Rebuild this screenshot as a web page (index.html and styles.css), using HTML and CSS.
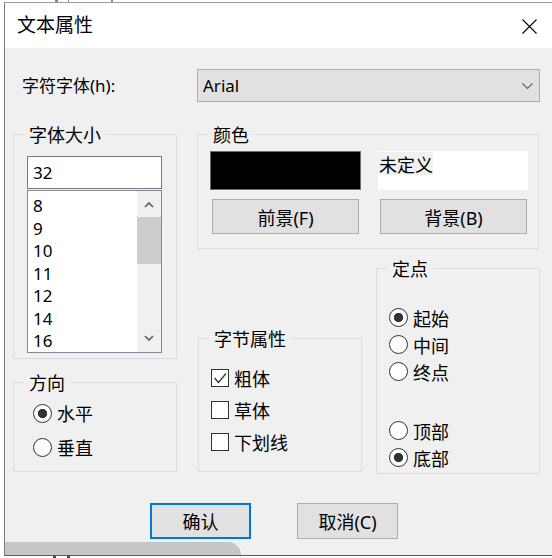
FILE: index.html
```html
<!DOCTYPE html>
<html lang="zh-CN">
<head>
    <meta charset="utf-8">
    <title>文本属性</title>
    <link rel="stylesheet" href="styles.css">
</head>
<body>
    <div class="behind behind-top">
        <span class="mark" style="margin-left: 55px; width: 3px"></span>
        <span class="mark" style="margin-left: 10px; width: 1px"></span>
        <span class="mark" style="margin-left: 42px; width: 2px"></span>
    </div>

    <div class="dialog" role="dialog" aria-label="文本属性">
        <header class="titlebar">
            <span class="title">文本属性</span>
            <svg class="close" width="15" height="15" viewBox="0 0 15 15" aria-hidden="true">
                <path d="M0.5 0.5 L14.5 14.5 M14.5 0.5 L0.5 14.5" stroke="#000" stroke-width="1.1" fill="none"/>
            </svg>
        </header>

        <div class="client">
            <div class="font-row">
                <label class="font-label">字符字体(h):</label>
                <div class="select">
                    <span>Arial</span>
                    <svg width="11" height="7" viewBox="0 0 11 7" aria-hidden="true">
                        <polyline points="0.5,0.5 5.5,5.5 10.5,0.5" stroke="#606060" stroke-width="1.1" fill="none"/>
                    </svg>
                </div>
            </div>

            <div class="groups">
                <div class="left-col">
                    <section class="group group-size">
                        <div class="group-title">字体大小</div>
                        <div class="size-edit">32</div>
                        <div class="size-list">
                            <ul class="size-items">
                                <li>8</li>
                                <li>9</li>
                                <li>10</li>
                                <li>11</li>
                                <li>12</li>
                                <li>14</li>
                                <li>16</li>
                            </ul>
                            <div class="scrollbar">
                                <div class="scroll-btn">
                                    <svg width="10" height="7" viewBox="0 0 10 7"><polyline points="1,6 5,2 9,6" stroke="#606060" stroke-width="1.7" fill="none"/></svg>
                                </div>
                                <div class="scroll-thumb"></div>
                                <div class="scroll-btn scroll-btn-down">
                                    <svg width="10" height="7" viewBox="0 0 10 7"><polyline points="1,1 5,5 9,1" stroke="#606060" stroke-width="1.7" fill="none"/></svg>
                                </div>
                            </div>
                        </div>
                    </section>

                    <section class="group group-dir">
                        <div class="group-title">方向</div>
                        <div class="options">
                            <div class="option"><span class="radio checked"></span>水平</div>
                            <div class="option"><span class="radio"></span>垂直</div>
                        </div>
                    </section>
                </div>

                <section class="group group-color">
                    <div class="group-title">颜色</div>
                    <div class="swatches">
                        <div class="swatch swatch-fg"></div>
                        <div class="swatch swatch-bg"><span>未定义</span></div>
                    </div>
                    <div class="swatch-buttons">
                        <button class="btn btn-wide">前景(F)</button>
                        <button class="btn btn-wide">背景(B)</button>
                    </div>
                </section>

                <section class="group group-style">
                    <div class="group-title">字节属性</div>
                    <div class="options">
                        <div class="option"><span class="checkbox"><svg width="16" height="16" viewBox="0 0 16 16"><polyline points="2.5,8 6.5,12.5 14,3.5" stroke="#333" stroke-width="1.3" fill="none"/></svg></span>粗体</div>
                        <div class="option"><span class="checkbox"></span>草体</div>
                        <div class="option"><span class="checkbox"></span>下划线</div>
                    </div>
                </section>

                <section class="group group-anchor">
                    <div class="group-title">定点</div>
                    <div class="options">
                        <div class="option"><span class="radio checked"></span>起始</div>
                        <div class="option"><span class="radio"></span>中间</div>
                        <div class="option"><span class="radio"></span>终点</div>
                        <div class="option option-gap"><span class="radio"></span>顶部</div>
                        <div class="option"><span class="radio checked"></span>底部</div>
                    </div>
                </section>
            </div>

            <div class="actions">
                <button class="btn btn-action btn-default">确认</button>
                <button class="btn btn-action">取消(C)</button>
            </div>

            <div class="peek"></div>
        </div>
    </div>

    <div class="behind behind-bottom">
        <span class="mark" style="margin-left: 53px; width: 3px"></span>
        <span class="mark" style="margin-left: 11px; width: 3px"></span>
    </div>
</body>
</html>
```

FILE: styles.css
```css
:root {
    --face: #f0f0f0;
    --group-line: #dcdcdc;
    --btn-face: #e1e1e1;
    --btn-line: #adadad;
    --glyph: #333333;
}

* {
    margin: 0;
    padding: 0;
    box-sizing: border-box;
}

body {
    width: 552px;
    height: 558px;
    overflow: hidden;
    background: #ffffff;
    font-family: "Noto Sans", "Noto Sans CJK SC", sans-serif;
    font-size: 18px;
    color: #000;
}

/* bits of the window behind the dialog */
.behind {
    display: flex;
    height: 2px;
    background: #ffffff;
}

.mark {
    display: block;
    height: 100%;
    background: #8c8c8c;
}

.behind-bottom .mark {
    background: #4a4a4a;
}

.dialog {
    margin-left: 4px;
    width: 548px;
    border-top: 1px solid #9a9a9a;
    border-left: 1px solid #7e7e7e;
    border-bottom: 1px solid #5c5c5c;
}

.titlebar {
    height: 45px;
    background: #ffffff;
    display: flex;
    align-items: center;
    justify-content: space-between;
    padding: 0 15px 0 12px;
}

.title {
    font-size: 19px;
    line-height: 45px;
}

.close {
    display: block;
    margin-top: 1px;
}

.client {
    background: var(--face);
    padding: 21px 12px 0 8px;
}

/* font row */
.font-row {
    display: flex;
    height: 33px;
}

.font-label {
    width: 175px;
    margin-left: 9px;
    line-height: 33px;
    font-size: 17px;
}

.select {
    flex: 1;
    display: flex;
    align-items: center;
    justify-content: space-between;
    padding: 0 6px 0 5px;
    background: var(--btn-face);
    border: 1px solid var(--btn-line);
    font-size: 17px;
}

.select svg {
    display: block;
    margin-top: 1px;
}

/* group boxes */
.groups {
    margin-top: 32px;
    display: grid;
    grid-template-columns: 184px 179px 164px;
    grid-template-rows: 115px 206px;
    row-gap: 19px;
}

.group {
    border: 1px solid var(--group-line);
    width: 164px;
}

.group-title {
    width: fit-content;
    margin: -10px 0 0 10px;
    padding: 0 5px;
    background: var(--face);
    line-height: 20px;
}

.left-col {
    grid-row: 1 / 3;
    display: flex;
    flex-direction: column;
    gap: 23px;
}

.group-size {
    height: 225px;
}

.size-edit {
    margin: 11px 0 0 13px;
    width: 135px;
    height: 33px;
    border: 1px solid #7a7a7a;
    background: #fff;
    padding-left: 5px;
    line-height: 31px;
    font-size: 17px;
}

.size-list {
    margin: 1px 0 0 13px;
    width: 135px;
    height: 163px;
    border: 1px solid #828790;
    background: #fff;
    display: flex;
}

.size-items {
    flex: 1;
    list-style: none;
    padding: 4px 0 0 5px;
    font-size: 17px;
    line-height: 22.5px;
    overflow: hidden;
}

.scrollbar {
    width: 24px;
    background: var(--face);
    display: flex;
    flex-direction: column;
}

.scroll-btn {
    height: 27px;
    display: flex;
    align-items: center;
    justify-content: center;
}

.scroll-btn-down {
    margin-top: auto;
}

.scroll-thumb {
    height: 47px;
    margin-top: -1px;
    background: #cdcdcd;
}

.group-dir {
    height: 90px;
}

.group-dir .options {
    margin: 3px 0 0 19px;
}

.group-dir .option {
    height: 34px;
}

/* options */
.option {
    display: flex;
    align-items: center;
    gap: 5px;
}

.radio {
    width: 19px;
    height: 19px;
    border: 1px solid var(--glyph);
    border-radius: 50%;
    background: #fff;
    flex: none;
}

.radio.checked {
    background: radial-gradient(circle, var(--glyph) 0 4.3px, #fff 5px);
}

.checkbox {
    width: 18px;
    height: 18px;
    border: 1px solid var(--glyph);
    background: #fff;
    flex: none;
    display: flex;
}

.checkbox svg {
    display: block;
}

/* colour group */
.group-color {
    grid-column: 2 / 4;
    width: 342px;
    height: 115px;
}

.swatches {
    display: flex;
    gap: 17px;
    margin: 6px 0 0 12px;
}

.swatch {
    width: 151px;
    height: 39px;
}

.swatch-fg {
    background: #000;
    border: 1px solid #6d6d6d;
}

.swatch-bg {
    width: 150px;
    background: #fff;
    padding-top: 1px;
}

.swatch-bg span {
    display: inline-block;
    background: #f0f0f0;
    line-height: 20px;
    padding: 3px 0 0 1px;
}

.swatch-buttons {
    display: flex;
    gap: 21px;
    margin: 9px 0 0 14px;
}

.btn {
    font: inherit;
    color: #000;
    background: var(--btn-face);
    border: 1px solid var(--btn-line);
}

.btn-wide {
    width: 147px;
    height: 35px;
}

.group-style {
    grid-column: 2;
    grid-row: 2;
    align-self: end;
    height: 134px;
    margin: 0 0 2px 1px;
}

.group-style .options {
    margin: 13px 0 0 12px;
}

.group-style .option {
    height: 32px;
}

.group-anchor {
    grid-column: 3;
    grid-row: 2;
    height: 206px;
}

.group-anchor .options {
    margin: 25px 0 0 12px;
}

.group-anchor .option {
    height: 27px;
}

.group-anchor .option-gap {
    margin-top: 32px;
}

/* bottom buttons */
.actions {
    display: flex;
    gap: 46px;
    margin-top: 29px;
    padding-left: 137px;
}

.btn-action {
    width: 101px;
    height: 36px;
}

.btn-default {
    border: 2px solid #0078d7;
}

.peek {
    margin: 3px 0 0 -8px;
    width: 236px;
    height: 13px;
    background: #c6c6c6;
    border-top-right-radius: 13px;
}
```
